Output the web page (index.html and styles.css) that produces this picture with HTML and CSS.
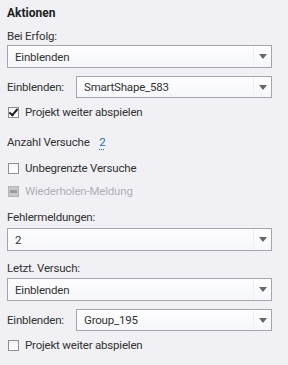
FILE: index.html
```html
<!DOCTYPE html>
<html lang="de">
<head>
  <meta charset="UTF-8">
  <title>Aktionen</title>
  <link rel="stylesheet" href="styles.css">
</head>
<body>
<div id="panel">
  <div class="title">Aktionen</div>

  <div class="label gap7">Bei Erfolg:</div>
  <div class="select gap1"><span>Einblenden</span><i class="arrow"></i></div>

  <div class="row gap8">
    <span class="rowlabel">Einblenden:</span>
    <div class="select"><span>SmartShape_583</span><i class="arrow"></i></div>
  </div>
  <div class="check gap6"><span class="box checked"></span>Projekt weiter abspielen</div>

  <div class="label gap14">Anzahl Versuche <a class="num">2</a></div>
  <div class="check gap10"><span class="box"></span>Unbegrenzte Versuche</div>
  <div class="check disabled gap7"><span class="box mixed"></span>Wiederholen-Meldung</div>

  <div class="label gap10">Fehlermeldungen:</div>
  <div class="select gap3"><span>2</span><i class="arrow"></i></div>

  <div class="label gap9">Letzt. Versuch:</div>
  <div class="select gap2"><span>Einblenden</span><i class="arrow"></i></div>

  <div class="row gap8">
    <span class="rowlabel">Einblenden:</span>
    <div class="select"><span>Group_195</span><i class="arrow"></i></div>
  </div>
  <div class="check gap6"><span class="box"></span>Projekt weiter abspielen</div>
</div>
</body>
</html>
```

FILE: styles.css
```css
body {
  margin: 0;
  padding: 0;
  background-color: #f0f0f5;
}
#panel {
  width: 288px;
  height: 365px;
  box-sizing: border-box;
  padding: 5px 16px 0 7px;
  display: flex;
  flex-direction: column;
  font-family: Roboto, "Noto Sans", sans-serif;
  font-size: 11.5px;
  letter-spacing: -0.2px;
  color: #333333;
}
.title {
  line-height: 16px;
  font-size: 12px;
  letter-spacing: 0;
  font-weight: bold;
  color: #222222;
}
.label {
  line-height: 16px;
}
.num {
  margin-left: 7px;
  color: #2a6cc0;
  text-decoration: underline dotted;
  text-underline-offset: 3px;
}

/* selects */
.select {
  height: 23px;
  box-sizing: border-box;
  border: 1px solid #a5a5ad;
  background: linear-gradient(#fdfdfe, #f6f7fa);
  display: flex;
  align-items: center;
  position: relative;
}
.select span {
  flex: 1;
  padding-left: 7px;
}
.select .arrow {
  width: 17px;
  align-self: stretch;
  border-left: 1px solid #eeeff3;
  display: flex;
  align-items: center;
  justify-content: center;
}
.select .arrow::after {
  content: "";
  border-left: 4px solid transparent;
  border-right: 4px solid transparent;
  border-top: 5px solid #666670;
}
.row {
  display: flex;
  align-items: center;
}
.row .rowlabel {
  width: 69px;
}
.row .select {
  flex: 1;
  height: 22px;
}

/* checkboxes */
.check {
  display: flex;
  align-items: center;
  line-height: 16px;
}
.box {
  width: 11px;
  height: 11px;
  box-sizing: border-box;
  border: 1px solid #8e8f96;
  background: linear-gradient(#f4f4f6, #ffffff);
  margin: 0 6px 0 1px;
  position: relative;
}
.box.checked::after {
  content: "";
  position: absolute;
  left: 2px;
  top: -1px;
  width: 3px;
  height: 7px;
  border-right: 2px solid #1e1e1e;
  border-bottom: 2px solid #1e1e1e;
  transform: rotate(40deg);
}
.box.mixed {
  border-color: #b4b4b8;
  background: #c8c8cc;
}
.box.mixed::after {
  content: "";
  position: absolute;
  left: 1px;
  right: 1px;
  top: 3px;
  height: 3px;
  background: #9a9a9e;
}
.disabled {
  color: #b0b0b5;
}

.gap1 { margin-top: 1px; }
.gap2 { margin-top: 2px; }
.gap3 { margin-top: 3px; }
.gap6 { margin-top: 6px; }
.gap7 { margin-top: 7px; }
.gap8 { margin-top: 8px; }
.gap9 { margin-top: 9px; }
.gap10 { margin-top: 10px; }
.gap14 { margin-top: 14px; }
```
